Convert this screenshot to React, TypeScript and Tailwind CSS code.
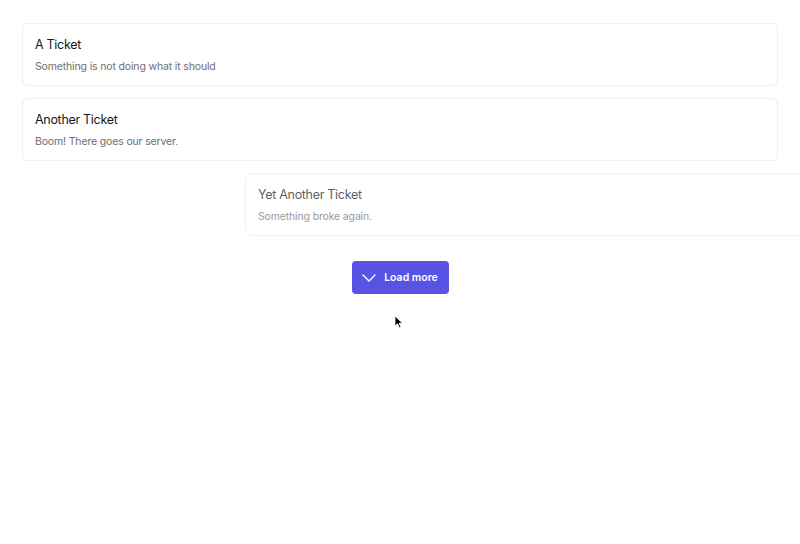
import React from 'react';

interface Ticket {
  title: string;
  body: string;
}

const tickets: Ticket[] = [
  { title: 'A Ticket', body: 'Something is not doing what it should' },
  { title: 'Another Ticket', body: 'Boom! There goes our server.' },
];

const TicketCard: React.FC<{ ticket: Ticket; className?: string }> = ({ ticket, className = '' }) => (
  <div className={`rounded-md border border-[#efeff1] bg-white px-3 pt-[11px] pb-[10px] ${className}`}>
    <h3 className="h-5 text-[12.5px] leading-5 font-normal tracking-[-0.3px] text-[#18181b]">{ticket.title}</h3>
    <p className="mt-1 h-4 text-[10.5px] leading-4 tracking-[-0.15px] text-[#6e6e73]">{ticket.body}</p>
  </div>
);

export default function App() {
  return (
    <div
      className="relative h-[544px] w-[800px] overflow-hidden bg-white px-[22px] pt-[23px]"
      style={{ fontFamily: 'Inter, "Noto Sans", sans-serif' }}
    >
      <div className="flex flex-col gap-3">
        {tickets.map((t) => (
          <TicketCard key={t.title} ticket={t} />
        ))}
        {/* entering item, mid-animation */}
        <TicketCard
          ticket={{ title: 'Yet Another Ticket', body: 'Something broke again.' }}
          className="translate-x-[223px] opacity-70"
        />
      </div>

      <div className="mt-[25px] flex justify-center">
        <button className="flex h-[33px] w-[97px] items-center justify-center gap-2 rounded-[4px] bg-[#5753e4] text-[10.5px] font-semibold text-white">
          <svg width="14" height="8" viewBox="0 0 14 8" fill="none">
            <path d="M1 1 L7 7 L13 1" stroke="#fff" strokeWidth="1.4" strokeLinecap="round" strokeLinejoin="round" />
          </svg>
          <span>Load more</span>
        </button>
      </div>

      {/* mouse cursor */}
      <svg className="absolute left-[394px] top-[315px]" width="10" height="14" viewBox="0 0 10 14">
        <path d="M1 1 L1 11 L3.5 8.8 L5.5 13 L7 12.3 L5.1 8.2 L8.5 8.2 Z" fill="#000" stroke="#fff" strokeWidth="0.8" />
      </svg>
    </div>
  );
}
